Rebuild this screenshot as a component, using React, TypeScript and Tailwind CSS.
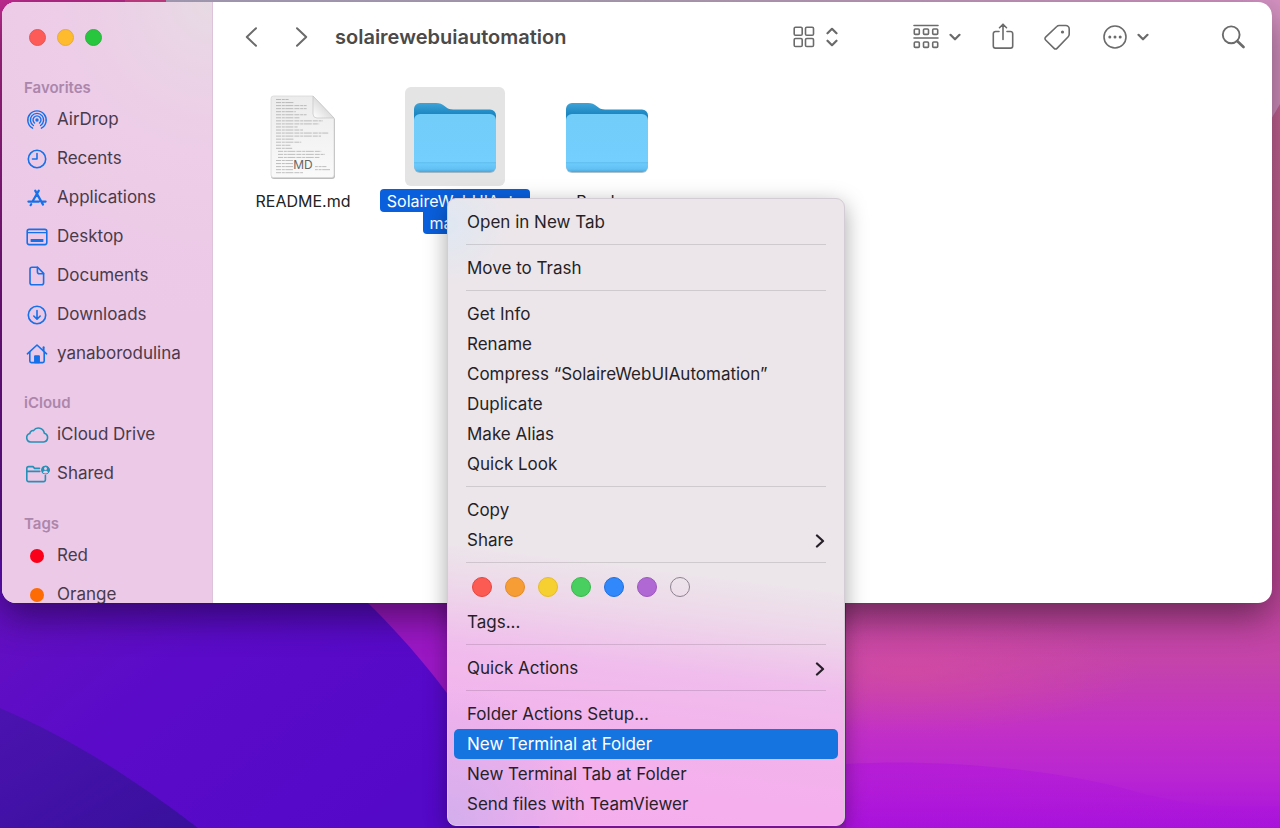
import { ReactNode } from "react";

type IconProps = { children: ReactNode; className?: string; box?: string };

function Icon({ children, className = "h-6 w-6", box = "0 0 24 24" }: IconProps) {
  return (
    <svg
      viewBox={box}
      className={className}
      fill="none"
      stroke="currentColor"
      strokeWidth={1.6}
      strokeLinecap="round"
      strokeLinejoin="round"
      aria-hidden="true"
    >
      {children}
    </svg>
  );
}

function Wallpaper() {
  return (
    <svg
      viewBox="0 0 1280 828"
      preserveAspectRatio="none"
      className="absolute inset-0 h-full w-full"
      aria-hidden="true"
    >
      <defs>
        <linearGradient id="sky" x1="0" y1="0" x2="0" y2="1">
          <stop offset="0" stopColor="#c9679c" />
          <stop offset="0.4" stopColor="#c2608f" />
          <stop offset="0.7" stopColor="#c04899" />
          <stop offset="0.8" stopColor="#c443ab" />
          <stop offset="0.88" stopColor="#c230c6" />
          <stop offset="0.94" stopColor="#b925d2" />
          <stop offset="1" stopColor="#a812dc" />
        </linearGradient>
        <radialGradient id="glow" cx="0.5" cy="0.5" r="0.5">
          <stop offset="0" stopColor="#d84f9c" stopOpacity="0.6" />
          <stop offset="1" stopColor="#d84f9c" stopOpacity="0" />
        </radialGradient>
        <linearGradient id="wave" x1="0" y1="0" x2="1" y2="1">
          <stop offset="0" stopColor="#ae12dc" stopOpacity="0.5" />
          <stop offset="1" stopColor="#a80ede" stopOpacity="0.1" />
        </linearGradient>
        <linearGradient id="violet" x1="0" y1="0" x2="1" y2="0.6">
          <stop offset="0" stopColor="#6510c0" />
          <stop offset="0.4" stopColor="#5b0bc8" />
          <stop offset="1" stopColor="#5408c8" />
        </linearGradient>
        <linearGradient id="indigo" x1="0" y1="0" x2="1" y2="1">
          <stop offset="0" stopColor="#4b12b0" />
          <stop offset="1" stopColor="#38109c" />
        </linearGradient>
        <linearGradient id="left" x1="0" y1="0" x2="0" y2="1">
          <stop offset="0" stopColor="#c02c90" />
          <stop offset="0.5" stopColor="#7a1486" />
          <stop offset="1" stopColor="#5a109c" />
        </linearGradient>
        <linearGradient id="top" x1="0" y1="0" x2="1" y2="0">
          <stop offset="0" stopColor="#aaa6c2" />
          <stop offset="0.5" stopColor="#b3a2b8" />
          <stop offset="1" stopColor="#d492c4" />
        </linearGradient>
      </defs>
      <rect width="1280" height="828" fill="url(#sky)" />
      <path d="M1260 0h20v104l-20 34Z" fill="#d592c2" />
      <ellipse cx="910" cy="672" rx="230" ry="62" fill="url(#glow)" />
      <rect x="360" y="560" width="486" height="268" fill="#9a17c4" />
      <path d="M846 764 C940 758 1060 770 1130 790 S1240 806 1280 806 V828 H846Z" fill="url(#wave)" />
      <rect width="1270" height="10" fill="url(#top)" />
      <rect width="166" height="10" fill="#c93f88" />
      <rect width="125" height="10" fill="#b92a8c" />
      <rect width="20" height="600" fill="url(#left)" />
      <path d="M0 560 H320 C380 610 425 660 470 725 L540 828 H0Z" fill="url(#violet)" />
      <path d="M0 708 C70 738 130 776 198 828 H0Z" fill="url(#indigo)" />
    </svg>
  );
}

const favorites: { label: string; icon: ReactNode }[] = [
  {
    label: "AirDrop",
    icon: (
      <Icon>
        <g strokeWidth="1.4">
          <path d="M7.6 20.2a9.2 9.2 0 1 1 8.8 0" />
          <path d="M8.4 17.5a6.6 6.6 0 1 1 7.2 0" />
          <path d="M9.5 15a4 4 0 1 1 5 0" />
        </g>
        <circle cx="12" cy="12" r="1.7" fill="currentColor" stroke="none" />
      </Icon>
    ),
  },
  {
    label: "Recents",
    icon: (
      <Icon>
        <circle cx="12" cy="12" r="8.7" />
        <path d="M12 6.5V12H7.5" />
      </Icon>
    ),
  },
  {
    label: "Applications",
    icon: (
      <Icon>
        <g strokeWidth="2.2">
          <path d="M13.8 4.6 7.6 15.2M10.2 4.6l7.8 14M3.4 15.6H14M17 15.6h3.6M6.2 18.2l-.6 1" />
        </g>
      </Icon>
    ),
  },
  {
    label: "Desktop",
    icon: (
      <Icon>
        <rect x="2.2" y="4.4" width="19.6" height="15.2" rx="2" />
        <path d="M2.6 7.6h18.8" strokeWidth="1.3" />
        <rect x="5.6" y="14" width="12.8" height="3" rx="0.5" fill="currentColor" stroke="none" />
      </Icon>
    ),
  },
  {
    label: "Documents",
    icon: (
      <Icon>
        <path d="M7 3.2h5.6l6 6.2v9.4a2 2 0 0 1-2 2H7a2 2 0 0 1-2-2V5.2a2 2 0 0 1 2-2Z" />
        <path d="M12.4 3.4v4.4a2 2 0 0 0 2 2h4.2" />
      </Icon>
    ),
  },
  {
    label: "Downloads",
    icon: (
      <Icon>
        <circle cx="12" cy="12" r="8.7" />
        <path d="M12 7.6v8.4M8.8 13l3.2 3.2 3.2-3.2" />
      </Icon>
    ),
  },
  {
    label: "yanaborodulina",
    icon: (
      <Icon>
        <path d="M2.4 11.8 12 3l9.6 8.8" />
        <path d="M4.8 10v9a1.6 1.6 0 0 0 1.6 1.6h11.2a1.6 1.6 0 0 0 1.6-1.6v-9" />
        <path d="M18.6 5.2v3.4" strokeWidth="2" />
        <path d="M9.6 20.4v-6.6h4.8v6.6Z" fill="currentColor" strokeWidth="1" />
      </Icon>
    ),
  },
];

const icloud: { label: string; icon: ReactNode }[] = [
  {
    label: "iCloud Drive",
    icon: (
      <Icon>
        <path d="M5.600 19a4.300 4.300 0 0 1-.8-8.400 3.200 3.200 0 0 1 3.700-3 6 6 0 0 1 10.800 2.600A4.500 4.500 0 0 1 18.600 19Z" />
      </Icon>
    ),
  },
  {
    label: "Shared",
    icon: (
      <Icon className="h-6 w-6 overflow-visible">
        <path d="M14.5 6.4H9.6L8 4.6H3.6A1.8 1.8 0 0 0 1.8 6.4v11.4a1.8 1.8 0 0 0 1.8 1.8h15a1.8 1.8 0 0 0 1.8-1.8v-4.2M1.8 9.4h13" />
        <circle cx="20.5" cy="8" r="4" fill="currentColor" strokeWidth="1" />
        <circle cx="20.5" cy="6.6" r="1.5" fill="#ebcbe7" stroke="none" />
        <path d="M17.9 10.4c.6-2.3 4.6-2.3 5.2 0-1.4 1.4-3.8 1.4-5.2 0Z" fill="#ebcbe7" stroke="none" />
      </Icon>
    ),
  },
];

const tags = [
  { label: "Red", dot: "bg-[#fb0019]" },
  { label: "Orange", dot: "bg-[#fd6b04]" },
];

function SidebarRow({ label, children, tint }: { label: string; children: ReactNode; tint: string }) {
  return (
    <li>
      <a href="#" className="flex h-[39px] items-center gap-2 text-[17px] text-[#493a4b]">
        <span className={`flex w-6 shrink-0 justify-center ${tint}`}>{children}</span>
        {label}
      </a>
    </li>
  );
}

function SidebarHeading({ children }: { children: ReactNode }) {
  return <h2 className="text-[15px] leading-[25px] font-semibold text-[#ab86ac]">{children}</h2>;
}

function Sidebar() {
  return (
    <nav
      aria-label="Locations"
      className="w-[211px] shrink-0 overflow-hidden border-r border-[#dcc3da] bg-[#ecc9e7] bg-[radial-gradient(circle_at_100%_0,#e7dae4_0,#ebd2e6_80px,#edcde8_150px,transparent_320px)] pl-[22px]"
    >
      <div className="flex gap-[11px] pt-[27px] pl-[5px]">
        <button aria-label="Close" className="h-[17px] w-[17px] rounded-full border border-[#ee554f] bg-[#fc5b57]" />
        <button aria-label="Minimize" className="h-[17px] w-[17px] rounded-full border border-[#e8ac35] bg-[#fdbb2d]" />
        <button aria-label="Zoom" className="h-[17px] w-[17px] rounded-full border border-[#27b83a] bg-[#28c63f]" />
      </div>
      <div className="mt-[29px]">
        <SidebarHeading>Favorites</SidebarHeading>
        <ul className="pl-px">
          {favorites.map((f) => (
            <SidebarRow key={f.label} label={f.label} tint="text-[#1670ea]">
              {f.icon}
            </SidebarRow>
          ))}
        </ul>
      </div>
      <div className="mt-[17px]">
        <SidebarHeading>iCloud</SidebarHeading>
        <ul className="pl-px">
          {icloud.map((f) => (
            <SidebarRow key={f.label} label={f.label} tint="text-[#2591b8]">
              {f.icon}
            </SidebarRow>
          ))}
        </ul>
      </div>
      <div className="mt-[18px]">
        <SidebarHeading>Tags</SidebarHeading>
        <ul className="pl-px">
          {tags.map((t) => (
            <SidebarRow key={t.label} label={t.label} tint="">
              <span className={`h-3.5 w-3.5 rounded-full ${t.dot}`} />
            </SidebarRow>
          ))}
        </ul>
      </div>
    </nav>
  );
}

function ChevronDown() {
  return (
    <Icon className="h-3 w-3" box="0 0 12 12">
      <path d="M1.5 3.8 6 8.3l4.5-4.5" strokeWidth="2.2" />
    </Icon>
  );
}

function Toolbar() {
  return (
    <header className="flex h-[70px] items-center pr-[27px] pl-[29px] text-[#6b6b6b]">
      <button aria-label="Back" className="mr-[29px]">
        <Icon className="h-5 w-5" box="0 0 20 20">
          <path d="M14 1.2 4.8 10l9.2 8.8" strokeWidth="2" />
        </Icon>
      </button>
      <button aria-label="Forward">
        <Icon className="h-5 w-5" box="0 0 20 20">
          <path d="M6 1.2 15.2 10 6 18.8" strokeWidth="2" />
        </Icon>
      </button>
      <h1 className="ml-6 flex-1 text-[20px] font-semibold text-[#4a4a4a]">solairewebuiautomation</h1>
      <button aria-label="View as icons" className="mr-[75px] flex items-center gap-2.5">
        <Icon className="h-6 w-6">
          <rect x="2.2" y="2.2" width="8" height="8" rx="1.3" />
          <rect x="13.5" y="2.2" width="8" height="8" rx="1.3" />
          <rect x="2.2" y="13.5" width="8" height="8" rx="1.3" />
          <rect x="13.5" y="13.5" width="8" height="8" rx="1.3" />
        </Icon>
        <Icon className="h-5 w-3" box="0 0 12 20">
          <path d="M1.5 6.3 6 1.8l4.5 4.5M1.5 13.7 6 18.2l4.5-4.5" strokeWidth="2.2" />
        </Icon>
      </button>
      <button aria-label="Group items" className="mr-[30px] flex items-center gap-2.5">
        <Icon className="h-[26px] w-[26px]" box="0 0 26 26">
          <path d="M1 1.5h24M1 14h24" />
          <rect x="1.3" y="5" width="5" height="5.4" rx="1" />
          <rect x="10.5" y="5" width="5" height="5.4" rx="1" />
          <rect x="19.7" y="5" width="5" height="5.4" rx="1" />
          <rect x="1.3" y="18" width="5" height="5.4" rx="1" />
          <rect x="10.5" y="18" width="5" height="5.4" rx="1" />
          <rect x="19.7" y="18" width="5" height="5.4" rx="1" />
        </Icon>
        <ChevronDown />
      </button>
      <button aria-label="Share" className="mr-[28px]">
        <Icon className="h-[28px] w-[24px]" box="0 0 24 28">
          <path d="M8 8.5H4.5a2.2 2.2 0 0 0-2.2 2.2v12.2a2.2 2.2 0 0 0 2.2 2.2h15a2.2 2.2 0 0 0 2.2-2.2V10.7a2.2 2.2 0 0 0-2.2-2.2H16M12 16.5v-15M8.5 4.7 12 1.2l3.5 3.5" />
        </Icon>
      </button>
      <button aria-label="Edit tags" className="mr-[32px]">
        <Icon className="h-[28px] w-[28px]" box="0 0 28 28">
          <path d="M16.2 2.5h6.6a3.4 3.4 0 0 1 3.4 3.4v5.4a3.4 3.4 0 0 1-1 2.4L14 25.4a2 2 0 0 1-2.9 0L2.6 17a2 2 0 0 1 0-2.9L13.8 3.5a3.4 3.4 0 0 1 2.4-1Z" />
          <circle cx="19.5" cy="9" r="1.6" fill="currentColor" stroke="none" />
        </Icon>
      </button>
      <button aria-label="More actions" className="mr-[72px] flex items-center gap-2.5">
        <Icon className="h-6 w-6">
          <circle cx="12" cy="12" r="11" />
          <g fill="currentColor" stroke="none">
            <circle cx="6.8" cy="12" r="1.5" />
            <circle cx="12" cy="12" r="1.5" />
            <circle cx="17.2" cy="12" r="1.5" />
          </g>
        </Icon>
        <ChevronDown />
      </button>
      <button aria-label="Search">
        <Icon className="h-6 w-6">
          <circle cx="10.2" cy="9.8" r="8.4" strokeWidth="1.9" />
          <path d="m16.5 16.2 6 5.8" strokeWidth="2.6" />
        </Icon>
      </button>
    </header>
  );
}

function FolderArt() {
  return (
    <svg viewBox="0 0 84 74" className="h-[74px] w-[84px]" aria-hidden="true">
      <defs>
        <linearGradient id="back" x1="0" y1="0" x2="0" y2="1">
          <stop offset="0" stopColor="#3ea3d8" />
          <stop offset="0.3" stopColor="#1d86c1" />
          <stop offset="1" stopColor="#1d86c1" />
        </linearGradient>
        <linearGradient id="front" x1="0" y1="0" x2="0" y2="1">
          <stop offset="0" stopColor="#72cdf9" />
          <stop offset="0.82" stopColor="#74cefe" />
          <stop offset="0.84" stopColor="#5fbfee" />
          <stop offset="0.86" stopColor="#6dcafb" />
          <stop offset="0.95" stopColor="#62c0f3" />
          <stop offset="1" stopColor="#4ba6d8" />
        </linearGradient>
      </defs>
      <path d="M1 9a6 6 0 0 1 6-6h16c4 0 6 1 8.5 3l2 1.6C35.5 9 37 9.500 40 9.500h37a6 6 0 0 1 6 6V40H1Z" fill="url(#back)" />
      <rect x="1" y="40" width="82" height="33" rx="6" fill="#7c98aa" opacity="0.6" />
      <rect x="1" y="14" width="82" height="58" rx="6" fill="url(#front)" />
    </svg>
  );
}

const docLines = [14, 20, 44, 38, 22, 40, 26, 52, 48, 24, 30, 58, 50, 20, 28, 16, 18, 48, 52, 46, 20, 40, 56, 60, 30];

function MarkdownArt() {
  return (
    <svg viewBox="0 0 70 90" className="h-[90px] w-[70px]" aria-hidden="true">
      <defs>
        <linearGradient id="paper" x1="0" y1="0" x2="0" y2="1">
          <stop offset="0" stopColor="#ececec" />
          <stop offset="1" stopColor="#fafafa" />
        </linearGradient>
        <linearGradient id="curl" x1="0" y1="1" x2="1" y2="0">
          <stop offset="0" stopColor="#fff" />
          <stop offset="0.5" stopColor="#dedede" />
          <stop offset="1" stopColor="#fff" />
        </linearGradient>
      </defs>
      <path d="M5 5h40l22 22v57a3 3 0 0 1-3 3H6a3 3 0 0 1-3-3V7a3 3 0 0 1 2-2Z" fill="#bdbdbd" />
      <path d="M5.500 4H45l21 22v57a2.500 2.500 0 0 1-2.500 2.500h-58A2.500 2.500 0 0 1 3 83V6.500A2.500 2.500 0 0 1 5.500 4Z" fill="url(#paper)" stroke="#d8d8d8" strokeWidth="0.8" />
      <g stroke="#8f8f8f" strokeWidth="0.9" strokeDasharray="5 0.8 3 0.6 8 1" opacity="0.6">
        {docLines.map((w, i) => (
          <path key={i} d={`M${i > 16 && i < 20 ? 10 : 8} ${7.5 + i * 3.05}h${i < 7 ? Math.min(w, 34) * 0.9 : w * 0.9}`} />
        ))}
      </g>
      <rect x="25" y="67" width="22" height="12" fill="#f7f7f7" />
      <path d="M45 4v18a4 4 0 0 0 4 4h17Z" fill="url(#curl)" stroke="#c4c4c4" strokeWidth="0.7" />
      <text x="35" y="77" fontSize="12" textAnchor="middle" fill="#666" fontFamily="Inter, sans-serif">
        MD
      </text>
    </svg>
  );
}

function Files() {
  return (
    <ul className="flex flex-wrap pt-[15px] pl-[14px] text-center text-[16px] leading-[22px] text-[#222]">
      <li className="flex w-[152px] flex-col items-center">
        <div className="flex h-[99px] w-[100px] items-center justify-center">
          <MarkdownArt />
        </div>
        <span className="mt-[4px]">README.md</span>
      </li>
      <li className="flex w-[152px] flex-col items-center">
        <div className="flex h-[99px] w-[100px] items-center justify-center rounded-md bg-[#e4e4e4]">
          <FolderArt />
        </div>
        <span className="mt-[3px] rounded bg-[#0a5fdc] px-[7px] pt-px text-white">SolaireWebUIAuto</span>
        <span className="rounded-b bg-[#0a5fdc] px-[6px] text-white">mation</span>
      </li>
      <li className="flex w-[152px] flex-col items-center">
        <div className="flex h-[99px] w-[100px] items-center justify-center">
          <FolderArt />
        </div>
        <span className="mt-[4px]">Readme</span>
      </li>
    </ul>
  );
}

function MenuItem({ children, active, submenu }: { children: ReactNode; active?: boolean; submenu?: boolean }) {
  return (
    <button
      role="menuitem"
      className={`flex h-[30px] w-full items-center justify-between rounded-[5px] pt-0.5 pr-3 pl-[13px] text-left text-[17px] ${
        active ? "bg-[#1674e0] text-white" : "text-[#261f28]"
      }`}
    >
      {children}
      {submenu && (
        <Icon className="h-3.5 w-3.5" box="0 0 14 14">
          <path d="M5 1.5 11 7l-6 5.5" strokeWidth="2.3" />
        </Icon>
      )}
    </button>
  );
}

function Divider() {
  return (
    <div role="separator" className="h-4 px-3 pt-[7px]">
      <div className="h-px w-full bg-black/12" />
    </div>
  );
}

const swatches = [
  { name: "Red", tone: "border-[#e8453e] bg-[#fb5b52]" },
  { name: "Orange", tone: "border-[#e58a24] bg-[#f79d35]" },
  { name: "Yellow", tone: "border-[#e6bd28] bg-[#f6cf31]" },
  { name: "Green", tone: "border-[#38b94c] bg-[#48cf5f]" },
  { name: "Blue", tone: "border-[#1f6fe0] bg-[#3088fb]" },
  { name: "Purple", tone: "border-[#9d56c0] bg-[#b069d4]" },
  { name: "No color", tone: "border-[#8d828f] bg-transparent" },
];

function ContextMenu() {
  return (
    <div
      role="menu"
      className="absolute top-[198px] left-[447px] w-[398px] rounded-[9px] border border-[#d3ccd4] bg-[#ece6ea] bg-[radial-gradient(circle_at_0_100%,#d3aeec_0,transparent_140px),radial-gradient(circle_at_0_4%,#dfe7f2_0,transparent_60px),linear-gradient(187deg,#ece6ea_0,#ece6ea_58%,#eed6ea_65%,#f0bdec_73%,#f3b2ec_84%,#f6adec_100%)] px-[6px] pt-2 pb-1.5 shadow-[0_6px_22px_rgba(0,0,0,0.35)]"
    >
      <MenuItem>Open in New Tab</MenuItem>
      <Divider />
      <MenuItem>Move to Trash</MenuItem>
      <Divider />
      <MenuItem>Get Info</MenuItem>
      <MenuItem>Rename</MenuItem>
      <MenuItem>Compress “SolaireWebUIAutomation”</MenuItem>
      <MenuItem>Duplicate</MenuItem>
      <MenuItem>Make Alias</MenuItem>
      <MenuItem>Quick Look</MenuItem>
      <Divider />
      <MenuItem>Copy</MenuItem>
      <MenuItem submenu>Share</MenuItem>
      <Divider />
      <div className="flex h-9 items-center gap-[13px] pb-1 pl-[18px]">
        {swatches.map((s) => (
          <button key={s.name} aria-label={s.name} className={`h-5 w-5 rounded-full border ${s.tone}`} />
        ))}
      </div>
      <MenuItem>Tags...</MenuItem>
      <Divider />
      <MenuItem submenu>Quick Actions</MenuItem>
      <Divider />
      <MenuItem>Folder Actions Setup...</MenuItem>
      <MenuItem active>New Terminal at Folder</MenuItem>
      <MenuItem>New Terminal Tab at Folder</MenuItem>
      <MenuItem>Send files with TeamViewer</MenuItem>
    </div>
  );
}

export default function App() {
  return (
    <div className="relative flex h-screen flex-col overflow-hidden bg-[#5c0bc9] pt-0.5 pr-2 pb-[225px] pl-0.5 font-['Inter',sans-serif]">
      <Wallpaper />
      <main className="relative flex min-h-0 flex-1 overflow-hidden rounded-[14px] bg-white shadow-[0_14px_36px_rgba(0,0,0,0.45)]">
        <Sidebar />
        <section className="min-w-0 flex-1">
          <Toolbar />
          <Files />
        </section>
      </main>
      <ContextMenu />
    </div>
  );
}
